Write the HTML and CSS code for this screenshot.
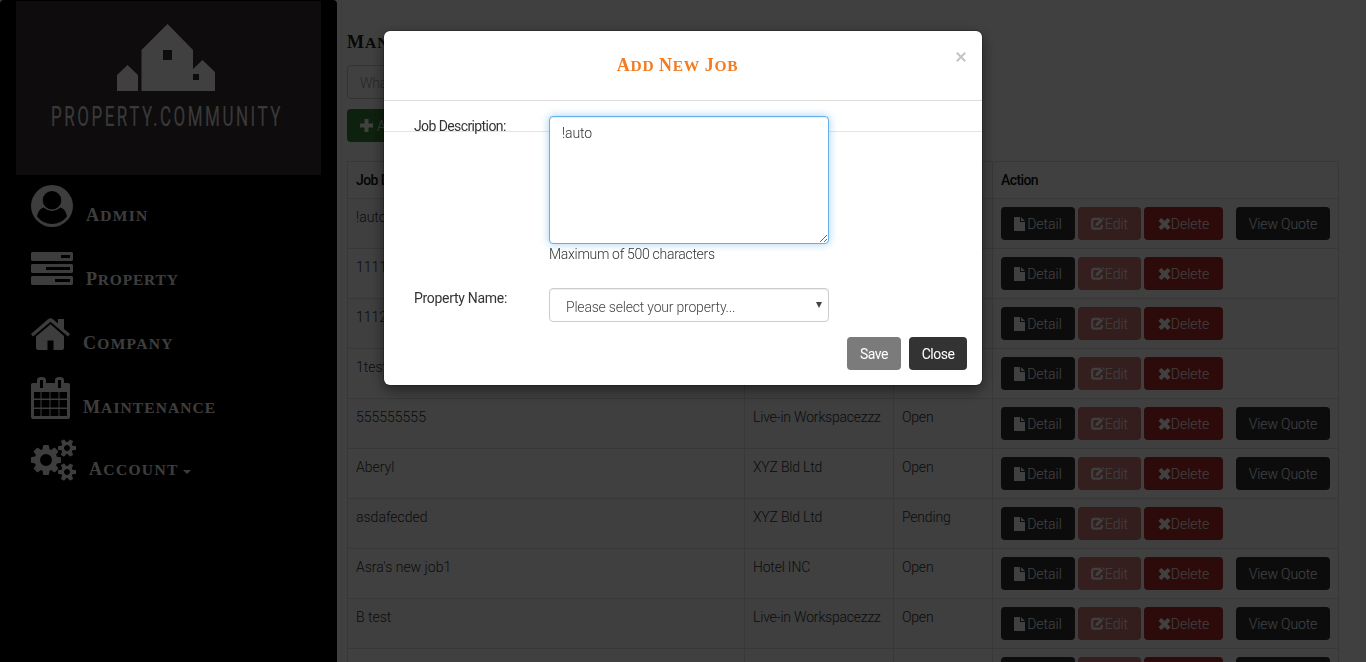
FILE: index.html
```html
<!DOCTYPE html>
<html lang="en">
<head>
<meta charset="utf-8">
<title>Manage Jobs</title>
<link rel="stylesheet" href="styles.css">
</head>
<body>
<svg class="defs" width="0" height="0" aria-hidden="true">
  <symbol id="file" viewBox="0 0 11 14"><path d="M0 0h6v5h5v9H0zM7 0l4 4H7z"/></symbol>
  <symbol id="edit" viewBox="0 0 14 13"><path d="M9.5 1.8H3.2Q1.2 1.8 1.2 3.8V9.5Q1.2 11.6 3.2 11.6H8.7Q10.8 11.6 10.8 9.5V8" fill="none" stroke="currentColor" stroke-width="2.2"/><path d="M4.3 9.2l.7-3L10 1.4l2.2 2.2-5 4.9zM10.9.6l.6-.6L14 2.2l-.8.7z"/></symbol>
  <symbol id="cross" viewBox="0 0 12 12"><path d="M2.8 0L6 3.1 9.2 0 12 2.8 8.9 6 12 9.2 9.2 12 6 8.9 2.8 12 0 9.2 3.1 6 0 2.8z"/></symbol>
</svg>
<div class="page">
  <aside class="sidebar">
    <svg class="logo" width="305" height="174" viewBox="0 0 305 174">
      <path fill="#fff" fill-rule="evenodd" d="M101 90V74L111.500 64 122 74V90zM125.500 90V49L151.500 23 177 49V68L186.500 59 199 71V90zM147 49v10h9V49zM177 73v6h6v-6z"/>
      <text class="logo-text" x="35" y="124.500" textLength="232" lengthAdjust="spacingAndGlyphs">PROPERTY.COMMUNITY</text>
    </svg>
    <nav class="nav">
      <a class="item"><svg class="ic" width="42" height="42" viewBox="0 0 42 42"><path fill-rule="evenodd" d="M21 0a21 21 0 1 0 0 42a21 21 0 1 0 0-42zM21 6a9.300 9.300 0 0 1 0 18.600a9.300 9.300 0 0 1 0-18.600zM12.500 22.500q8.500 7 17 0 5.500 2 6.500 9-6 7.500-15 7.500T6 31.500q1-7 6.500-9z"/></svg><span class="label caps admin">Admin</span></a>
      <a class="item"><svg class="ic" width="42" height="33" viewBox="0 0 42 33"><path fill-rule="evenodd" d="M1 0h40l1 1v7l-1 1H1L0 8V1zM30 3v3h9V3zM1 12h40l1 1v7l-1 1H1l-1-1v-7zM15 15v3h24v-3zM1 24h40l1 1v7l-1 1H1l-1-1v-7zM24 27v3h15v-3z"/></svg><span class="label caps property">Property</span></a>
      <a class="item"><svg class="ic home" width="39" height="32" viewBox="0 0 39 32"><path d="M0 16L17 1.200Q19.500-.8 22 1.200L27 5.500V1h6v10l6 5-2 2.500L19.500 3.700 2 18.500z"/><path d="M5 18.500L19.500 6.200 33 18V30.500L31.500 32H22.500V22.500H16.500V32H6.500L5 30.500z"/></svg><span class="label caps company">Company</span></a>
      <a class="item"><svg class="ic" width="39" height="42" viewBox="0 0 39 42"><path fill-rule="evenodd" d="M2 6H6V3q0-3 4.500-3T15 3v3h9V3q0-3 4.500-3T33 3v3h4q2 0 2 2v32q0 2-2 2H2q-2 0-2-2V8q0-2 2-2zM9 3v8h3V3zM27 3v8h3V3zM3 15v6.500h6.500V15zM10.500 15v6.500h8V15zM19.500 15v6.500h8V15zM28.500 15v6.500H36V15zM3 23v7.500h6.500V23zM10.500 23v7.500h8V23zM19.500 23v7.500h8V23zM28.500 23v7.500H36V23zM3 32v7h6.500v-7zM10.500 32v7h8v-7zM19.500 32v7h8v-7zM28.500 32v7H36v-7z"/></svg><span class="label caps maintenance">Maintenance</span></a>
      <a class="item"><svg class="ic cogs" width="45" height="42" viewBox="0 -256 1920 1792"><path d="M896 640q0-106-75-181t-181-75-181 75-75 181 75 181 181 75 181-75 75-181zm768 512q0-52-38-90t-90-38-90 38-38 90q0 53 37.500 90.500t90.500 37.500 90.500-37.500 37.500-90.500zm0-1024q0-52-38-90t-90-38-90 38-38 90q0 53 37.500 90.500t90.500 37.500 90.500-37.500 37.500-90.500zm-384 421v185q0 10-7 19.500t-16 10.500l-155 24q-11 35-32 76 34 48 90 115 7 11 7 20 0 12-7 19-23 30-82.500 89.500t-78.500 59.500q-11 0-21-7l-115-90q-37 19-77 31-11 108-23 155-7 24-30 24h-186q-11 0-20-7.500t-10-17.500l-23-153q-34-10-75-31l-118 89q-7 7-20 7-11 0-21-8-144-133-144-160 0-9 7-19 10-14 41-53t47-61q-23-44-35-82l-152-24q-10-1-17-9.500t-7-19.500v-185q0-10 7-19.500t16-10.500l155-24q11-35 32-76-34-48-90-115-7-11-7-20 0-12 7-20 22-30 82-89t79-59q11 0 21 7l115 90q34-18 77-32 11-108 23-154 7-24 30-24h186q11 0 20 7.500t10 17.500l23 153q34 10 75 31l118-89q8-7 20-7 11 0 21 8 144 133 144 160 0 8-7 19-12 16-42 54t-45 60q23 48 34 82l152 23q10 2 17 10.500t7 19.500zm640 533v140q0 16-149 31-12 27-30 52 51 113 51 138 0 4-4 7-122 71-124 71-8 0-46-47t-52-68q-20 2-30 2t-30-2q-14 21-52 68t-46 47q-2 0-124-71-4-3-4-7 0-25 51-138-18-25-30-52-149-15-149-31v-140q0-16 149-31 13-29 30-52-51-113-51-138 0-4 4-7 4-2 35-20t59-34 30-16q8 0 46 46.500t52 67.500q20-2 30-2t30 2q51-71 92-112l6-2q4 0 124 70 4 3 4 7 0 25-51 138 17 23 30 52 149 15 149 31zm0-1024v140q0 16-149 31-12 27-30 52 51 113 51 138 0 4-4 7-122 71-124 71-8 0-46-47t-52-68q-20 2-30 2t-30-2q-14 21-52 68t-46 47q-2 0-124-71-4-3-4-7 0-25 51-138-18-25-30-52-149-15-149-31v-140q0-16 149-31 13-29 30-52-51-113-51-138 0-4 4-7 4-2 35-20t59-34 30-16q8 0 46 46.500t52 67.500q20-2 30-2t30 2q51-71 92-112l6-2q4 0 124 70 4 3 4 7 0 25-51 138 17 23 30 52 149 15 149 31z"/></svg><span class="label caps account">Account</span><i class="caret"></i></a>
    </nav>
  </aside>
  <main class="main">
    <h1 class="title"><span class="caps">Manage</span> <span class="caps">Jobs</span></h1>
    <div class="search">What are you looking for?</div>
    <div class="add"><svg width="13" height="13" viewBox="0 0 13 13"><path d="M4.500 0h4v4.500H13v4H8.500V13h-4V8.500H0v-4h4.500z"/></svg>Add New Job</div>
    <table class="jobs">
      <colgroup><col class="c1"><col class="c2"><col class="c3"><col class="c4"></colgroup>
      <thead><tr><th>Job Description</th><th>Property</th><th>Status</th><th>Action</th></tr></thead>
      <tbody id="rows"></tbody>
    </table>
  </main>
</div>
<div class="backdrop"></div>
<section class="modal">
  <header class="modal-head"><h2><span class="caps">Add</span> <span class="caps">New</span> <span class="caps">Job</span></h2><svg class="close" width="10" height="10" viewBox="0 0 10 10"><path d="M.8.8l8.400 8.400M9.200.8L.8 9.200"/></svg></header>
  <div class="rule"></div>
  <div class="form">
    <label class="tight">Job Description:</label>
    <div><textarea class="area">!auto</textarea><p class="hint">Maximum of 500 characters</p></div>
    <label>Property Name:</label>
    <div class="select"><span>Please select your property...</span><i class="arrow"></i></div>
  </div>
  <footer class="foot"><span class="btn save">Save</span><span class="btn dismiss">Close</span></footer>
</section>
<script src="app.js"></script>
</body>
</html>
```

FILE: styles.css
```css
* { box-sizing: border-box; }
body { margin: 0; height: 662px; overflow: hidden; background: #fff; color: #333; font: 300 14px/20px Roboto, "Open Sans", sans-serif; }
svg { fill: currentColor; flex: none; }
.defs { position: absolute; }
.page { display: flex; height: 662px; overflow: hidden; }
.sidebar { width: 337px; flex: none; padding: 1px 16px; background: #000; color: #f4f4f4; border-radius: 4px 4px 0 0; }
.logo { display: block; background: #383337; }
.logo-text { font: 400 27px Roboto, sans-serif; letter-spacing: 4px; fill: #e4e4e4; }
.nav { padding: 10px 0 0 15px; }
.item { display: flex; align-items: flex-start; height: 64px; }
.item:nth-child(2) .ic { margin-top: 3px; }
.item .home { margin: 5px 0 0 0; }
.caps { display: inline-block; text-transform: uppercase; font: bold 15.5px/23px "Liberation Serif", serif; }
.caps::first-letter { font-size: 18px; }
.label { margin: 19px 0 0 13px; white-space: nowrap; }
.admin { letter-spacing: 1.3px; }
.property { letter-spacing: .8px; }
.company { letter-spacing: 1.3px; }
.maintenance { letter-spacing: 1.1px; }
.account { letter-spacing: 1.35px; }
.item:nth-child(5) { height: 60px; margin-top: -2px; }
.caret { border: 4px solid transparent; border-top-color: currentColor; border-bottom: 0; margin: 31px 0 0 4px; }
.main { width: 1001px; flex: none; margin-left: 4px; padding: 31px 5px 0; border-left: 1px solid #eee; letter-spacing: -.2px; }
.title { height: 23px; margin: 0 0 11px; font: bold 16px/23px "Liberation Serif", serif; letter-spacing: 1px; color: #222; }
.search { width: 280px; height: 34px; padding: 7px 12px; border: 1px solid #ccc; border-radius: 4px; color: #999; }
.add { display: flex; align-items: center; gap: 4px; width: 130px; height: 33px; margin: 10px 0 19px; padding: 0 13px; border-radius: 4px; background: #3a803a; color: #fff; }
.jobs { width: 991px; table-layout: fixed; border-collapse: collapse; }
.c1 { width: 397px; } .c2 { width: 149px; } .c3 { width: 99px; } .c4 { width: 346px; }
.jobs th, .jobs td { padding: 8px; border: 1px solid #ddd; text-align: left; vertical-align: top; }
.jobs th { height: 37px; font-weight: 500; color: #111; letter-spacing: -.6px; }
.jobs td { height: 50px; }
.jobs td:first-child { letter-spacing: 0; }
.jobs tbody tr:nth-child(odd) { background: #f9f9f9; }
.actions { display: flex; gap: 3px; letter-spacing: 0; }
.btn { display: flex; align-items: center; justify-content: center; height: 33px; border-radius: 4px; color: #fff; background: #333; white-space: nowrap; }
.detail { width: 74px; gap: 2px; }
.edit { width: 63px; background: #b8302f; opacity: .65; }
.delete { width: 79px; background: #b42e2a; }
.quote { width: 94px; margin-left: 10px; letter-spacing: -.15px; }
.backdrop { position: fixed; inset: 0; background: rgba(0,0,0,.75); }
.modal { position: fixed; left: 384px; top: 31px; width: 598px; height: 354px; background: #fff; border-radius: 6px; box-shadow: 0 5px 15px rgba(0,0,0,.5), 0 0 0 1px rgba(0,0,0,.2); font-weight: 400; }
.modal-head { position: relative; height: 70px; padding-top: 23px; border-bottom: 1px solid #ddd; }
.modal-head h2 { height: 23px; margin: 0; padding-right: 11px; text-align: center; color: #f47b20; font: bold 16px/23px "Liberation Serif", serif; letter-spacing: .7px; }
.close { position: absolute; right: 16px; top: 21px; stroke: #c4c4c4; stroke-width: 2; }
.rule { position: absolute; top: 100px; width: 100%; height: 1px; background: #e5e5e5; }
.form { position: relative; display: grid; grid-template-columns: 135px 280px; padding: 15px 30px 0; }
.form label { line-height: 20px; letter-spacing: -.3px; }
.form .tight { letter-spacing: -.6px; }
.area { display: block; width: 280px; height: 128px; margin: 0; padding: 6px 12px; border: 1px solid #66afe9; border-radius: 4px; outline: 0; box-shadow: inset 0 1px 1px rgba(0,0,0,.075), 0 0 8px rgba(102,175,233,.6); font: 300 14px/20px Roboto, sans-serif; letter-spacing: -.1px; color: #333; resize: both; }
.hint { margin: 0 0 24px; font-weight: 300; letter-spacing: -.3px; }
.select { display: flex; justify-content: space-between; height: 34px; padding: 8px 6px 0 16px; border: 1px solid #ccc; border-radius: 4px; color: #444; font-weight: 300; letter-spacing: -.2px; box-shadow: inset 0 1px 1px rgba(0,0,0,.075); }
.arrow { border: 3px solid transparent; border-top: 6px solid #444; border-bottom: 0; margin-top: 5px; }
.foot { display: flex; justify-content: flex-end; gap: 8px; padding: 15px 15px 0; letter-spacing: -.5px; }
.save { width: 54px; background: #7b7b7b; }
.dismiss { width: 58px; }
```

FILE: app.js
```js
const jobs = [
  ["!auto", "Live-in Workspacezzz", "Open", true],
  ["11111", "XYZ Bld Ltd", "Open", false],
  ["11122", "XYZ Bld Ltd", "Open", false],
  ["1test", "Hotel INC", "Open", false],
  ["555555555", "Live-in Workspacezzz", "Open", true],
  ["Aberyl", "XYZ Bld Ltd", "Open", true],
  ["asdafecded", "XYZ Bld Ltd", "Pending", false],
  ["Asra's new job1", "Hotel INC", "Open", true],
  ["B test", "Live-in Workspacezzz", "Open", true],
  ["", "", "", true]
];
const icon = (id, w, h) => `<svg width="${w}" height="${h}"><use href="#${id}"/></svg>`;
document.getElementById("rows").innerHTML = jobs.map(([name, property, status, quote]) => `
  <tr><td>${name}</td><td>${property}</td><td>${status}</td><td><div class="actions">
    <span class="btn detail">${icon("file", 11, 14)}Detail</span>
    <span class="btn edit">${icon("edit", 14, 13)}Edit</span>
    <span class="btn delete">${icon("cross", 13, 12)}Delete</span>
    ${quote ? '<span class="btn quote">View Quote</span>' : ""}
  </div></td></tr>`).join("");
```
